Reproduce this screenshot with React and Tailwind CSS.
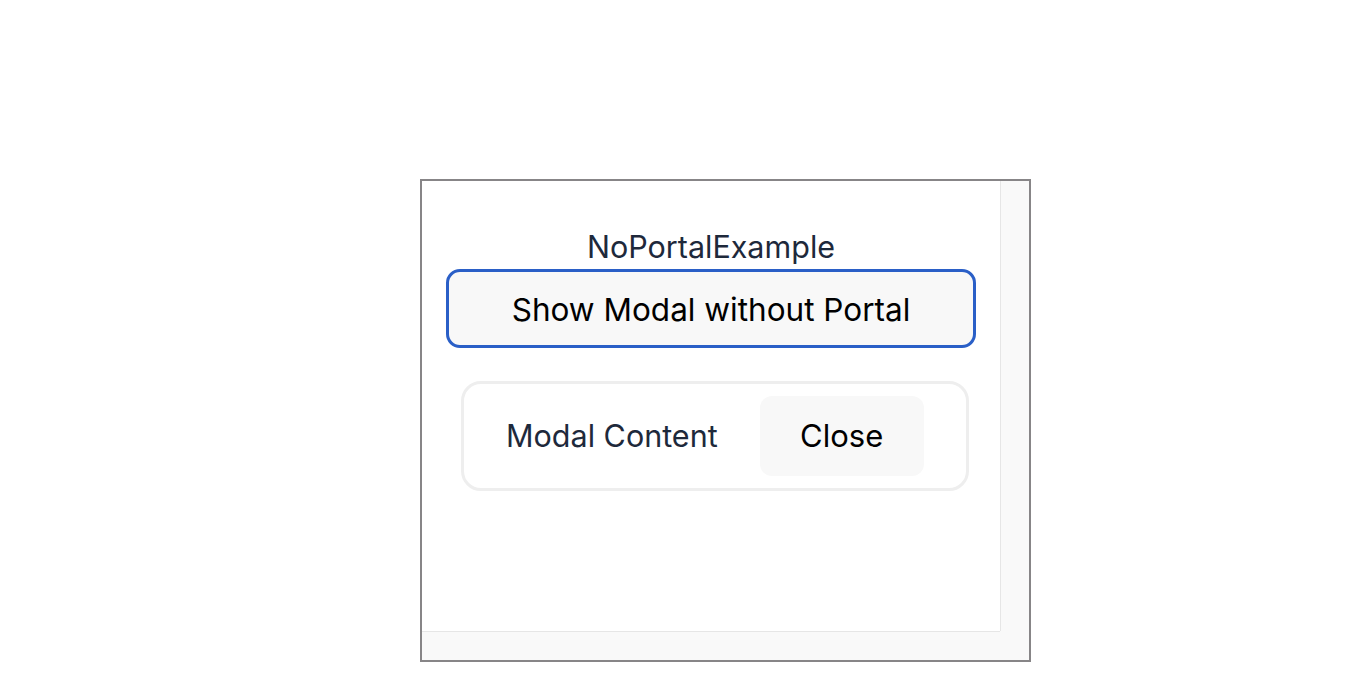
import React from "react";

export default function App() {
  return (
    <div className="min-h-screen bg-white pt-[179px] font-['Inter',sans-serif]">
      <div className="ml-[420px] flex h-[483px] w-[611px] flex-col border-2 border-[#878587]">
        <div className="flex min-h-0 flex-1">
          {/* scroll area */}
          <div className="flex-1 bg-white px-6 pt-[48px]">
            <div className="text-center text-[30.5px] leading-[36px] text-[#1e293b]">NoPortalExample</div>
            <button className="mt-[4px] flex h-[79px] w-full items-center justify-center rounded-[14px] border-[3px] border-[#2a5fc7] bg-[#f8f8f8] pt-[2px] text-[31.5px] text-black">
              Show Modal without Portal
            </button>
            <div className="ml-[15px] mt-[33px] flex h-[110px] w-[508px] items-center gap-[42px] rounded-[20px] border-[3px] border-[#eeeeee] pl-[42px]">
              <span className="text-[30.5px] text-[#1e293b]">Modal Content</span>
              <button className="flex h-[80px] w-[164px] items-center justify-center rounded-[12px] bg-[#f8f8f8] text-[31px] text-black">
                Close
              </button>
            </div>
          </div>
          {/* vertical scrollbar */}
          <div className="w-[29px] border-l border-[#e6e6e6] bg-[#f9f9f9]" />
        </div>
        <div className="flex h-[29px]">
          <div className="flex-1 border-t border-[#e6e6e6] bg-[#f9f9f9]" />
          <div className="w-[29px] bg-[#f9f9f9]" />
        </div>
      </div>
    </div>
  );
}
